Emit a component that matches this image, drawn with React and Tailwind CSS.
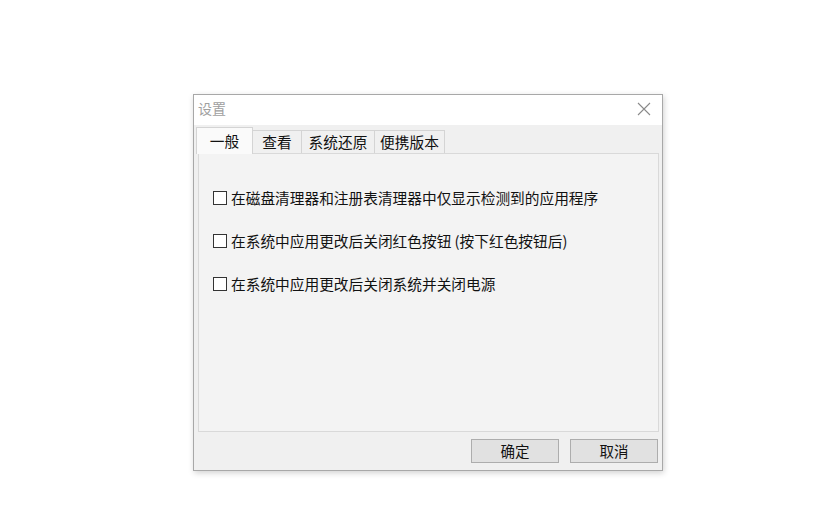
import React from 'react';

// Janela de configurações no estilo Windows clássico.

const FONT = { fontFamily: '"Microsoft YaHei", "Noto Sans CJK SC", "Noto Sans", sans-serif' };

const TABS = [
  { label: '一般', width: 'w-[57px]', active: true },
  { label: '查看', width: 'w-[49px]' },
  { label: '系统还原', width: 'w-[73px]' },
  { label: '便携版本', width: 'w-[70px]' },
];

const OPTIONS = [
  '在磁盘清理器和注册表清理器中仅显示检测到的应用程序',
  '在系统中应用更改后关闭红色按钮 (按下红色按钮后)',
  '在系统中应用更改后关闭系统并关闭电源',
];

function CloseIcon() {
  return (
    <svg width="14" height="14" viewBox="0 0 14 14" fill="none">
      <path d="M1 1 L13 13 M13 1 L1 13" stroke="#8a8a8a" strokeWidth="1.1" />
    </svg>
  );
}

function Option({ children }) {
  return (
    <label className="flex items-center gap-[4px] h-[16px]">
      <span className="w-[14px] h-[14px] border border-[#333] bg-white shrink-0" />
      <span className="text-[14.7px] text-[#111] leading-none whitespace-nowrap">{children}</span>
    </label>
  );
}

function Button({ children }) {
  return (
    <button className="w-[88px] h-[24px] bg-[#e1e1e1] border border-[#adadad] text-[14.5px] text-[#111] leading-none">
      {children}
    </button>
  );
}

export default function App() {
  return (
    <div className="w-[832px] h-[526px] bg-white pl-[193px] pt-[94px]" style={FONT}>
      <div className="w-[470px] h-[377px] bg-[#f0f0f0] border border-[#a8a8a8] shadow-[1px_2px_6px_rgba(0,0,0,0.18)] flex flex-col">
        {/* barra de título */}
        <div className="h-[30px] bg-white flex items-center justify-between pl-[4px] pr-[11px] pb-[3px] shrink-0">
          <span className="text-[14px] text-[#a0a0a0]">设置</span>
          <CloseIcon />
        </div>

        {/* abas */}
        <div className="h-[28px] flex items-end pl-[2px] shrink-0">
          {TABS.map((t) =>
            t.active ? (
              <div
                key={t.label}
                className={`${t.width} h-[27px] bg-[#fafafa] border border-b-0 border-[#d4d4d4] text-[14.7px] text-[#111] flex items-center justify-center relative -mb-px z-10`}
              >
                {t.label}
              </div>
            ) : (
              <div
                key={t.label}
                className={`${t.width} h-[23px] bg-[#f0f0f0] border border-l-0 border-b-0 border-[#d4d4d4] text-[14.7px] text-[#111] flex items-center justify-center`}
              >
                {t.label}
              </div>
            )
          )}
        </div>

        {/* painel */}
        <div className="ml-[4px] mr-[3px] h-[279px] bg-[#f3f3f3] border border-[#d9d9d9] flex flex-col gap-[27px] pl-[14px] pt-[36px] shrink-0">
          {OPTIONS.map((o) => (
            <Option key={o}>{o}</Option>
          ))}
        </div>

        {/* botões */}
        <div className="flex justify-end gap-[11px] pr-[4px] pt-[7px]">
          <Button>确定</Button>
          <Button>取消</Button>
        </div>
      </div>
    </div>
  );
}
